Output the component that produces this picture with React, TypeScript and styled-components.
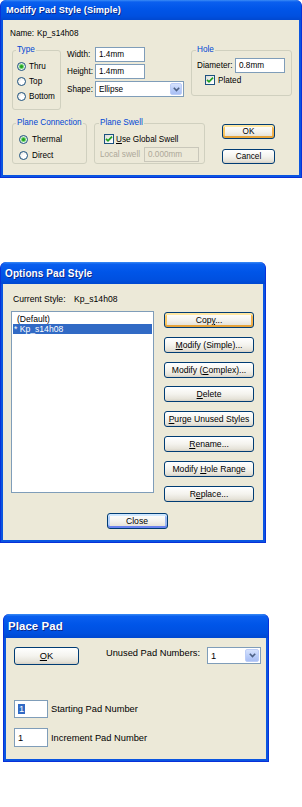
import React from "react";
import styled, { createGlobalStyle, css } from "styled-components";

const GlobalStyle = createGlobalStyle`
  body {
    margin: 0;
    background: #ffffff;
    font-family: "Liberation Sans", Arial, sans-serif;
  }
`;

const Page = styled.div`
  width: 302px;
  display: flex;
  flex-direction: column;
  align-items: flex-start;
`;

const Frame = styled.section<{ $width: number; $top: number; $left?: number; $size: number }>`
  box-sizing: border-box;
  width: ${(p) => p.$width}px;
  margin: ${(p) => p.$top}px 0 0 ${(p) => p.$left ?? 0}px;
  border: 1px solid #0831d9;
  border-top: none;
  border-radius: 6px 6px 0 0;
  background: #0a55e0;
  font-size: ${(p) => p.$size}px;
  color: #000;
`;

const TitleBar = styled.header<{ $height: number; $size: number; $pad: number }>`
  height: ${(p) => p.$height}px;
  display: flex;
  align-items: center;
  padding-left: ${(p) => p.$pad}px;
  border-radius: 6px 6px 0 0;
  background: linear-gradient(
    180deg,
    #3b8cf5 0%,
    #0a5fef 10%,
    #0055e8 45%,
    #0050e0 80%,
    #0048d0 100%
  );
  color: #ffffff;
  font-weight: bold;
  font-size: ${(p) => p.$size}px;
  text-shadow: 1px 1px 0 #0c2a8a;
  letter-spacing: 0.1px;
`;

const Body = styled.div<{ $height: number; $pad: string }>`
  box-sizing: border-box;
  margin: 0 2px 2px;
  height: ${(p) => p.$height}px;
  padding: ${(p) => p.$pad};
  background: #ece9d8;
  display: flex;
  flex-direction: column;
  align-items: flex-start;
`;

const Row = styled.div<{ $mt?: number; $ml?: number }>`
  display: flex;
  align-items: flex-start;
  margin-top: ${(p) => p.$mt ?? 0}px;
  margin-left: ${(p) => p.$ml ?? 0}px;
`;

const Line = styled.div<{ $ml?: number }>`
  height: 12px;
  line-height: 12px;
  margin-left: ${(p) => p.$ml ?? 0}px;
  white-space: nowrap;
  display: flex;
`;

const Label = styled.span<{ $w?: number; $muted?: boolean }>`
  display: inline-block;
  width: ${(p) => (p.$w ? `${p.$w}px` : "auto")};
  white-space: nowrap;
  color: ${(p) => (p.$muted ? "#aca899" : "#000")};
`;

const Group = styled.fieldset<{ $w: number; $h: number; $pad: string; $ml?: number }>`
  box-sizing: border-box;
  width: ${(p) => p.$w}px;
  height: ${(p) => p.$h}px;
  margin: 0 0 0 ${(p) => p.$ml ?? 0}px;
  padding: ${(p) => p.$pad};
  border: 1px solid #d0d0bf;
  border-radius: 3px;
  min-width: 0;
  display: flex;
  flex-direction: column;
  align-items: flex-start;
`;

const Legend = styled.legend<{ $ml: number }>`
  color: #0046d5;
  padding: 0 1px;
  margin-left: ${(p) => p.$ml}px;
  line-height: 10px;
  white-space: nowrap;
`;

const Option = styled.div<{ $h: number; $ml?: number; $gap?: number }>`
  display: flex;
  align-items: center;
  height: ${(p) => p.$h}px;
  margin-left: ${(p) => p.$ml ?? 0}px;
  gap: ${(p) => p.$gap ?? 3}px;
  white-space: nowrap;
`;

const RadioDot = styled.span<{ $on?: boolean; $size: number }>`
  box-sizing: border-box;
  width: ${(p) => p.$size}px;
  height: ${(p) => p.$size}px;
  border-radius: 50%;
  border: 1px solid #1c5180;
  background: radial-gradient(circle at 65% 65%, #ffffff 30%, #dcdcd5 100%);
  display: inline-flex;
  align-items: center;
  justify-content: center;
  &::after {
    content: "";
    width: 3px;
    height: 3px;
    border-radius: 50%;
    background: ${(p) => (p.$on ? "#21a121" : "transparent")};
    box-shadow: ${(p) => (p.$on ? "0 0 1px 1px #5fcf5f" : "none")};
  }
`;

const CheckBox = styled.span<{ $size: number }>`
  box-sizing: border-box;
  width: ${(p) => p.$size}px;
  height: ${(p) => p.$size}px;
  border: 1px solid #1c5180;
  background: linear-gradient(135deg, #dcdcd7 0%, #ffffff 90%);
  display: inline-flex;
  align-items: center;
  justify-content: center;
`;

const Field = styled.div<{ $w: number; $h: number; $disabled?: boolean }>`
  box-sizing: border-box;
  width: ${(p) => p.$w}px;
  height: ${(p) => p.$h}px;
  border: 1px solid ${(p) => (p.$disabled ? "#c9c7ba" : "#7f9db9")};
  background: ${(p) => (p.$disabled ? "#ece9d8" : "#ffffff")};
  color: ${(p) => (p.$disabled ? "#aca899" : "#000")};
  padding-left: 3px;
  display: flex;
  align-items: center;
  white-space: nowrap;
`;

const Combo = styled(Field)`
  justify-content: space-between;
  padding-right: 1px;
`;

const ComboButton = styled.span<{ $w: number; $h: number }>`
  width: ${(p) => p.$w}px;
  height: ${(p) => p.$h}px;
  border-radius: 2px;
  background: linear-gradient(180deg, #d6e2fd 0%, #b7cbf8 60%, #a9bff4 100%);
  border: 1px solid #bccdf7;
  box-sizing: border-box;
  display: flex;
  align-items: center;
  justify-content: center;
`;

const Picked = styled.span`
  background: #316ac5;
  color: #ffffff;
  padding: 0 1px;
`;

type Tone = "plain" | "hot" | "focus";

const Button = styled.button<{ $w: number; $h: number; $tone?: Tone }>`
  box-sizing: border-box;
  width: ${(p) => p.$w}px;
  height: ${(p) => p.$h}px;
  padding: 0;
  font: inherit;
  color: #000;
  border: 1px solid #003c74;
  border-radius: 3px;
  background: linear-gradient(180deg, #ffffff 0%, #f4f3ee 50%, #e6e3d9 85%, #d6d0c5 100%);
  white-space: nowrap;
  ${(p) =>
    p.$tone === "hot" &&
    css`
      box-shadow: inset 0 2px 0 #ffe7a2, inset 0 -2px 0 #e5a33a, inset 2px 0 0 #f9c865,
        inset -2px 0 0 #f3b14d;
    `}
  ${(p) =>
    p.$tone === "focus" &&
    css`
      box-shadow: inset 0 2px 0 #cee7ff, inset 0 -2px 0 #6982ee, inset 2px 0 0 #b7d3fb,
        inset -2px 0 0 #9bb8f3;
    `}
`;

const ListBox = styled.div<{ $w: number; $h: number }>`
  box-sizing: border-box;
  width: ${(p) => p.$w}px;
  height: ${(p) => p.$h}px;
  border: 1px solid #7f9db9;
  background: #ffffff;
  padding: 2px 1px;
  display: flex;
  flex-direction: column;
`;

const ListItem = styled.div<{ $selected?: boolean }>`
  height: 10px;
  line-height: 10px;
  padding-left: ${(p) => (p.$selected ? 1 : 4)}px;
  background: ${(p) => (p.$selected ? "#316ac5" : "transparent")};
  color: ${(p) => (p.$selected ? "#ffffff" : "#000")};
  white-space: nowrap;
`;

const Column = styled.div<{ $gap: number; $mt?: number; $ml?: number }>`
  display: flex;
  flex-direction: column;
  gap: ${(p) => p.$gap}px;
  margin-top: ${(p) => p.$mt ?? 0}px;
  margin-left: ${(p) => p.$ml ?? 0}px;
`;

const FieldGrid = styled.div<{ $ml: number }>`
  display: grid;
  grid-template-columns: 28px auto;
  row-gap: 2px;
  align-items: center;
  margin: 2px 0 0 ${(p) => p.$ml}px;
`;

const Centered = styled.div<{ $mt: number }>`
  align-self: stretch;
  display: flex;
  justify-content: center;
  margin-top: ${(p) => p.$mt}px;
`;

const TopRow = styled.div`
  align-self: stretch;
  display: flex;
  align-items: flex-start;
  gap: 7px;
`;

const Spacer = styled.div`
  flex: 1;
`;

const Chevron = () => (
  <svg width="7" height="5" viewBox="0 0 7 5">
    <path d="M0.8 0.8 L3.5 3.6 L6.2 0.8" fill="none" stroke="#4d6185" strokeWidth="1.6" />
  </svg>
);

const Tick = ({ size }: { size: number }) => (
  <svg width={size} height={size} viewBox="0 0 8 8">
    <path d="M1 3.8 L3 5.8 L7 1.6" fill="none" stroke="#21a121" strokeWidth="1.7" />
  </svg>
);

const ModifyPadStyle: React.FC = () => (
  <Frame $width={302} $top={0} $size={8.2}>
    <TitleBar $height={20} $size={9.2} $pad={5}>
      Modify Pad Style (Simple)
    </TitleBar>
    <Body $height={155} $pad="8px 0 0 7px">
      <Line>
        <Label $w={27}>Name:</Label>Kp_s14h08
      </Line>
      <Row $mt={5} $ml={2}>
        <Group $w={49} $h={65} $pad="4px 0 0 4px">
          <Legend $ml={-1}>Type</Legend>
          <Option $h={15}>
            <RadioDot $size={9} $on />
            Thru
          </Option>
          <Option $h={15}>
            <RadioDot $size={9} />
            Top
          </Option>
          <Option $h={15}>
            <RadioDot $size={9} />
            Bottom
          </Option>
        </Group>
        <FieldGrid $ml={6}>
          <Label>Width:</Label>
          <Field $w={50} $h={15}>1.4mm</Field>
          <Label>Height:</Label>
          <Field $w={50} $h={15}>1.4mm</Field>
          <Label>Shape:</Label>
          <Combo $w={89} $h={16}>
            Ellipse
            <ComboButton $w={12} $h={12}>
              <Chevron />
            </ComboButton>
          </Combo>
        </FieldGrid>
        <Group $w={101} $h={51} $pad="3px 0 0 5px" $ml={7}>
          <Legend $ml={-1}>Hole</Legend>
          <Option $h={15} $gap={0}>
            <Label $w={38}>Diameter:</Label>
            <Field $w={50} $h={15}>0.8mm</Field>
          </Option>
          <Option $h={14} $ml={8}>
            <CheckBox $size={10}>
              <Tick size={8} />
            </CheckBox>
            Plated
          </Option>
        </Group>
      </Row>
      <Row $mt={8} $ml={2}>
        <Group $w={75} $h={46} $pad="3px 0 0 6px">
          <Legend $ml={-3}>Plane Connection</Legend>
          <Option $h={17} $gap={4}>
            <RadioDot $size={9} $on />
            Thermal
          </Option>
          <Option $h={17} $gap={4}>
            <RadioDot $size={9} />
            Direct
          </Option>
        </Group>
        <Group $w={111} $h={46} $pad="4px 0 0 5px" $ml={7}>
          <Legend $ml={-1}>Plane Swell</Legend>
          <Option $h={14} $ml={4} $gap={2}>
            <CheckBox $size={10}>
              <Tick size={8} />
            </CheckBox>
            <span>
              <u>U</u>se Global Swell
            </span>
          </Option>
          <Option $h={17} $gap={0}>
            <Label $w={44} $muted>
              Local swell
            </Label>
            <Field $w={55} $h={15} $disabled>
              0.000mm
            </Field>
          </Option>
        </Group>
        <Column $gap={10} $mt={6} $ml={17}>
          <Button $w={53} $h={15} $tone="hot">
            OK
          </Button>
          <Button $w={53} $h={15}>
            Cancel
          </Button>
        </Column>
      </Row>
    </Body>
  </Frame>
);

const actions: { key: string; label: React.ReactNode; tone?: Tone }[] = [
  { key: "copy", label: <>Cop<u>y</u>...</>, tone: "hot" },
  { key: "simple", label: <><u>M</u>odify (Simple)...</> },
  { key: "complex", label: <>Modify (<u>C</u>omplex)...</> },
  { key: "delete", label: <><u>D</u>elete</> },
  { key: "purge", label: <><u>P</u>urge Unused Styles</> },
  { key: "rename", label: <><u>R</u>ename...</> },
  { key: "hole", label: <>Modify <u>H</u>ole Range</> },
  { key: "replace", label: <>R<u>e</u>place...</> },
];

const OptionsPadStyle: React.FC = () => (
  <Frame $width={266} $top={84} $size={8.6}>
    <TitleBar $height={22} $size={10} $pad={4}>
      Options Pad Style
    </TitleBar>
    <Body $height={256} $pad="9px 0 0 8px">
      <Line $ml={2}>
        <Label $w={61}>Current Style:</Label>Kp_s14h08
      </Line>
      <Row $mt={6}>
        <ListBox $w={143} $h={182}>
          <ListItem>(Default)</ListItem>
          <ListItem $selected>* Kp_s14h08</ListItem>
        </ListBox>
        <Column $gap={8.8} $mt={1} $ml={10}>
          {actions.map((a) => (
            <Button key={a.key} $w={90} $h={16} $tone={a.tone}>
              {a.label}
            </Button>
          ))}
        </Column>
      </Row>
      <Centered $mt={11}>
        <Button $w={61} $h={16} $tone="focus">
          Close
        </Button>
      </Centered>
    </Body>
  </Frame>
);

const PlacePad: React.FC = () => (
  <Frame $width={266} $top={71} $left={3} $size={9.3}>
    <TitleBar $height={24} $size={11.4} $pad={4}>
      Place Pad
    </TitleBar>
    <Body $height={121} $pad="9px 5px 0 8px">
      <TopRow>
        <Button $w={65} $h={18}>
          <u>O</u>K
        </Button>
        <Spacer />
        <Label style={{ marginTop: 1 }}>Unused Pad Numbers:</Label>
        <Combo $w={54} $h={17}>
          1
          <ComboButton $w={14} $h={13}>
            <Chevron />
          </ComboButton>
        </Combo>
      </TopRow>
      <Column $gap={10} $mt={35}>
        <Option $h={18} $gap={3}>
          <Field $w={34} $h={18}>
            <Picked>1</Picked>
          </Field>
          Starting Pad Number
        </Option>
        <Option $h={19} $gap={3}>
          <Field $w={34} $h={19}>1</Field>
          Increment Pad Number
        </Option>
      </Column>
    </Body>
  </Frame>
);

const App: React.FC = () => (
  <Page>
    <GlobalStyle />
    <ModifyPadStyle />
    <OptionsPadStyle />
    <PlacePad />
  </Page>
);

export default App;
